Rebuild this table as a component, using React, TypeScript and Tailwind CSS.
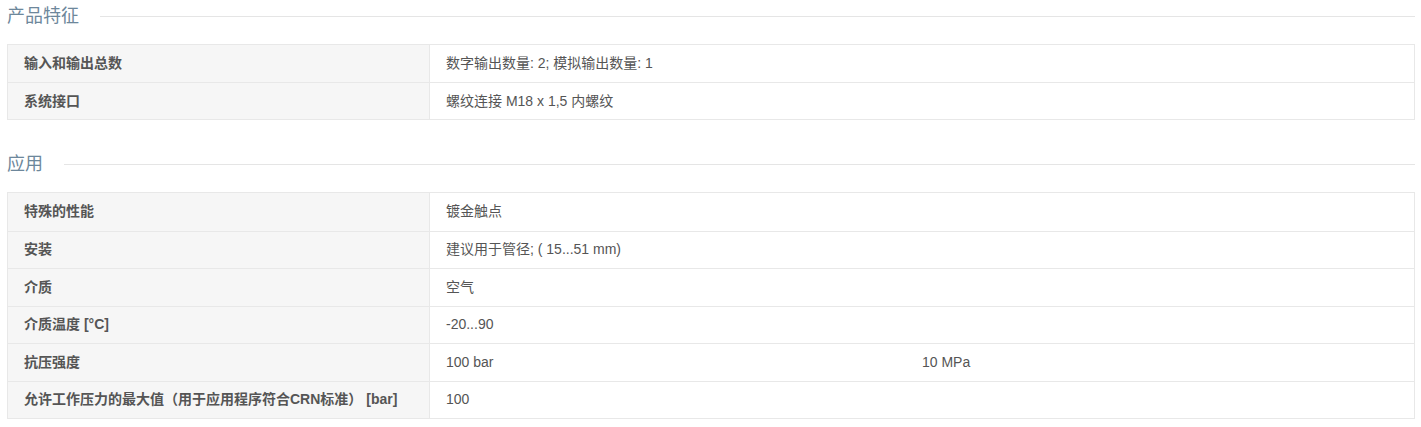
import React from "react";

const font = { fontFamily: '"Liberation Sans", Arial, "Noto Sans CJK SC", sans-serif' };

type Row = { label: string; values: string[] };

function Heading({ title }: { title: string }) {
  return (
    <div className="flex items-center h-[32px] mr-[6px]">
      <h3 className="text-[18px] leading-[32px] text-[#6d879b] pl-[7px] pr-[21px] whitespace-nowrap font-normal">{title}</h3>
      <div className="flex-1 h-px bg-[#e5e5e5]" />
    </div>
  );
}

function Table({ rows, rowH }: { rows: Row[]; rowH: string }) {
  return (
    <div className="ml-[7px] mr-[6px] border border-[#e8e8e8]">
      {rows.map((r, i) => (
        <div key={i} className={`flex ${rowH} ${i > 0 ? "border-t border-[#e8e8e8]" : ""}`}>
          <div className="w-[422px] shrink-0 bg-[#f6f6f6] border-r border-[#e8e8e8] pl-[16px] flex items-center text-[14px] font-bold text-[#555]">
            {r.label}
          </div>
          <div className="flex-1 flex items-center px-[16px] text-[14px] text-[#555]">
            {r.values.map((v, j) => (
              <div key={j} className="flex-1">{v}</div>
            ))}
          </div>
        </div>
      ))}
    </div>
  );
}

export default function App() {
  return (
    <div className="w-[1421px] h-[427px] bg-white" style={font}>
      <Heading title="产品特征" />
      <div className="mt-[12px]">
        <Table
          rowH="h-[37px]"
          rows={[
            { label: "输入和输出总数", values: ["数字输出数量: 2; 模拟输出数量: 1"] },
            { label: "系统接口", values: ["螺纹连接 M18 x 1,5 内螺纹"] },
          ]}
        />
      </div>
      <div className="mt-[28px]">
        <Heading title="应用" />
      </div>
      <div className="mt-[12px]">
        <Table
          rowH="h-[37.5px]"
          rows={[
            { label: "特殊的性能", values: ["镀金触点"] },
            { label: "安装", values: ["建议用于管径; ( 15...51 mm)"] },
            { label: "介质", values: ["空气"] },
            { label: "介质温度 [°C]", values: ["-20...90"] },
            { label: "抗压强度", values: ["100 bar", "10 MPa"] },
            { label: "允许工作压力的最大值（用于应用程序符合CRN标准） [bar]", values: ["100"] },
          ]}
        />
      </div>
    </div>
  );
}
